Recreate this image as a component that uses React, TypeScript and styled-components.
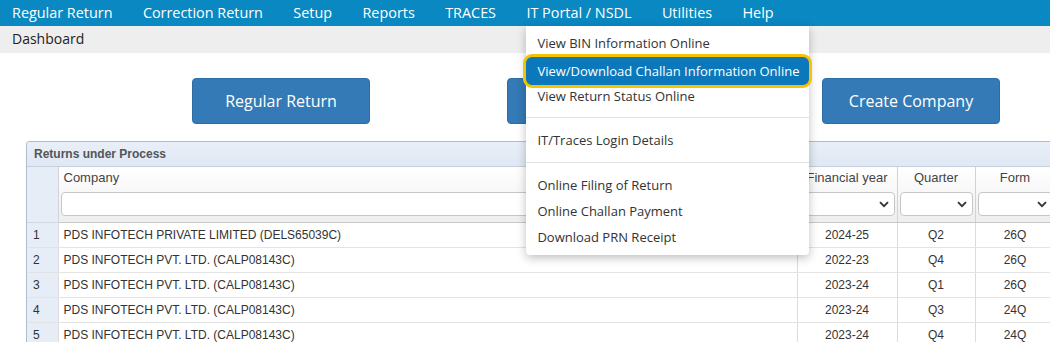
import styled, { createGlobalStyle } from 'styled-components'

const GlobalStyle = createGlobalStyle`
  body { margin: 0; background: #fff; overflow: hidden; }
  * { box-sizing: border-box; }
`

const Page = styled.div`
  width: 1050px;
  height: 342px;
  overflow: hidden;
  position: relative;
`

/* top menu */
const NavBar = styled.div`
  height: 26px;
  background: #0a88c1;
  display: flex;
  align-items: center;
  gap: 30.4px;
  padding-left: 12px;
  font-family: 'Open Sans', 'Noto Sans', sans-serif;
  font-size: 14.4px;
  color: #fff;
`

const NavItem = styled.div`
  position: relative;
  white-space: nowrap;
  line-height: 26px;
`

const Menu = styled.div`
  position: absolute;
  left: 0;
  top: 26px;
  width: 283px;
  background: #fff;
  border-radius: 0 0 4px 4px;
  box-shadow: 0 3px 10px rgba(0, 0, 0, 0.25);
  padding: 4px 0 5px;
  z-index: 10;
  font-family: 'Open Sans', 'Noto Sans', sans-serif;
  font-size: 13px;
  color: #333;
`

const MenuItem = styled.div`
  height: 26px;
  line-height: 26px;
  padding-left: 11px;
  white-space: nowrap;
`

/* highlighted entry with the yellow ring */
const ActiveItem = styled.div`
  position: relative;
  height: 34px;
  line-height: 28px;
  margin: -2px -3px -5px -3px;
  padding-left: 11px;
  background: #0b78bc;
  color: #fff;
  border: 3px solid #f6c304;
  border-radius: 9px;
  white-space: nowrap;
`

const MenuDivider = styled.div<{ $top: number; $bottom: number }>`
  height: 1px;
  background: #e3e3e3;
  margin: ${({ $top, $bottom }) => `${$top}px 0 ${$bottom}px`};
`

const Crumb = styled.div`
  height: 27px;
  line-height: 26px;
  background: #eeeeee;
  padding-left: 12px;
  font-family: 'Open Sans', 'Noto Sans', sans-serif;
  font-size: 14px;
  color: #222;
`

/* big buttons */
const ButtonRow = styled.div`
  display: flex;
  gap: 137px;
  padding: 25px 0 0 192px;
`

const BigButton = styled.div`
  width: 178px;
  height: 46px;
  flex: none;
  border-radius: 4px;
  background: #337ab7;
  border: 1px solid #2e6da4;
  color: #fff;
  font-family: 'Open Sans', 'Noto Sans', sans-serif;
  font-size: 16px;
  display: flex;
  align-items: center;
  justify-content: center;
`

/* grid */
const Panel = styled.div`
  margin: 17px 0 0 26px;
  border: 1px solid #aebdcc;
  border-right: none;
  border-radius: 4px 0 0 0;
  overflow: hidden;
  font-family: 'Liberation Sans', Arial, sans-serif;
`

const PanelTitle = styled.div`
  height: 25px;
  line-height: 25px;
  padding-left: 7px;
  background: linear-gradient(#e9eff8, #dfe8f4);
  border-bottom: 1px solid #c5d0dc;
  font-size: 12px;
  font-weight: bold;
  color: #555;
`

const Grid = styled.table`
  border-collapse: collapse;
  table-layout: fixed;
  width: 1100px;
  font-size: 12px;
  color: #333;
`

const HeadCell = styled.th<{ $align?: string }>`
  height: 55px;
  vertical-align: top;
  padding: 3px 2px 0;
  background: linear-gradient(#fff, #eeeeee);
  border-right: 1px solid #d3d3d3;
  border-bottom: 1px solid #c8c8c8;
  font-weight: normal;
  font-size: 13px;
  color: #444;
  text-align: ${({ $align }) => $align || 'center'};
  white-space: nowrap;
  overflow: hidden;
`

const RowHead = styled.th`
  background: #e6edf6;
  border-right: 1px solid #d3d3d3;
  border-bottom: 1px solid #d0d8e2;
  height: 55px;
`

const HeadLabel = styled.div<{ $pad?: number }>`
  height: 19px;
  padding-left: ${({ $pad }) => $pad ?? 0}px;
`

const Filter = styled.div`
  height: 24px;
  margin-top: 3px;
  background: #fff;
  border: 1px solid #c6c6c6;
  border-radius: 4px;
  display: flex;
  align-items: center;
  justify-content: flex-end;
  padding-right: 5px;
  color: #444;
`

const Cell = styled.td<{ $center?: boolean; $num?: boolean }>`
  height: 25px;
  padding: 0 ${({ $num }) => ($num ? '6px' : '5px')};
  border-right: 1px solid #dcdcdc;
  border-bottom: 1px solid #e3e3e3;
  text-align: ${({ $center }) => ($center ? 'center' : 'left')};
  background: ${({ $num }) => ($num ? '#e6edf6' : '#fff')};
  white-space: nowrap;
  overflow: hidden;
`

const Chevron = () => (
  <svg width="10" height="7" viewBox="0 0 10 7">
    <path d="M1 1.2 L5 5.2 L9 1.2" fill="none" stroke="#333" strokeWidth="1.8" />
  </svg>
)

const rows = [
  ['PDS INFOTECH PRIVATE LIMITED (DELS65039C)', '2024-25', 'Q2', '26Q'],
  ['PDS INFOTECH PVT. LTD. (CALP08143C)', '2022-23', 'Q4', '26Q'],
  ['PDS INFOTECH PVT. LTD. (CALP08143C)', '2023-24', 'Q1', '26Q'],
  ['PDS INFOTECH PVT. LTD. (CALP08143C)', '2023-24', 'Q3', '24Q'],
  ['PDS INFOTECH PVT. LTD. (CALP08143C)', '2023-24', 'Q4', '24Q'],
]

const navItems = ['Regular Return', 'Correction Return', 'Setup', 'Reports', 'TRACES', 'IT Portal / NSDL', 'Utilities', 'Help']

export default function App() {
  return (
    <Page>
      <GlobalStyle />
      <NavBar>
        {navItems.map((n) => (
          <NavItem key={n}>
            {n}
            {n === 'IT Portal / NSDL' && (
              <Menu>
                <MenuItem>View BIN Information Online</MenuItem>
                <ActiveItem>View/Download Challan Information Online</ActiveItem>
                <MenuItem>View Return Status Online</MenuItem>
                <MenuDivider $top={8} $bottom={9} />
                <MenuItem>IT/Traces Login Details</MenuItem>
                <MenuDivider $top={9} $bottom={9} />
                <MenuItem>Online Filing of Return</MenuItem>
                <MenuItem>Online Challan Payment</MenuItem>
                <MenuItem>Download PRN Receipt</MenuItem>
              </Menu>
            )}
          </NavItem>
        ))}
      </NavBar>
      <Crumb>Dashboard</Crumb>

      <ButtonRow>
        <BigButton>Regular Return</BigButton>
        {/* label is covered by the open menu */}
        <BigButton />
        <BigButton>Create Company</BigButton>
      </ButtonRow>

      <Panel>
        <PanelTitle>Returns under Process</PanelTitle>
        <Grid>
          <colgroup>
            <col style={{ width: 31 }} />
            <col style={{ width: 739 }} />
            <col style={{ width: 100 }} />
            <col style={{ width: 78 }} />
            <col style={{ width: 80 }} />
            <col />
          </colgroup>
          <thead>
            <tr>
              <RowHead />
              <HeadCell $align="left">
                <HeadLabel $pad={3}>Company</HeadLabel>
                <Filter />
              </HeadCell>
              <HeadCell>
                <HeadLabel>Financial year</HeadLabel>
                <Filter><Chevron /></Filter>
              </HeadCell>
              <HeadCell>
                <HeadLabel>Quarter</HeadLabel>
                <Filter><Chevron /></Filter>
              </HeadCell>
              <HeadCell>
                <HeadLabel>Form</HeadLabel>
                <Filter><Chevron /></Filter>
              </HeadCell>
              <HeadCell />
            </tr>
          </thead>
          <tbody>
            {rows.map((r, i) => (
              <tr key={i}>
                <Cell $num>{i + 1}</Cell>
                <Cell>{r[0]}</Cell>
                <Cell $center>{r[1]}</Cell>
                <Cell $center>{r[2]}</Cell>
                <Cell $center>{r[3]}</Cell>
                <Cell />
              </tr>
            ))}
          </tbody>
        </Grid>
      </Panel>
    </Page>
  )
}
